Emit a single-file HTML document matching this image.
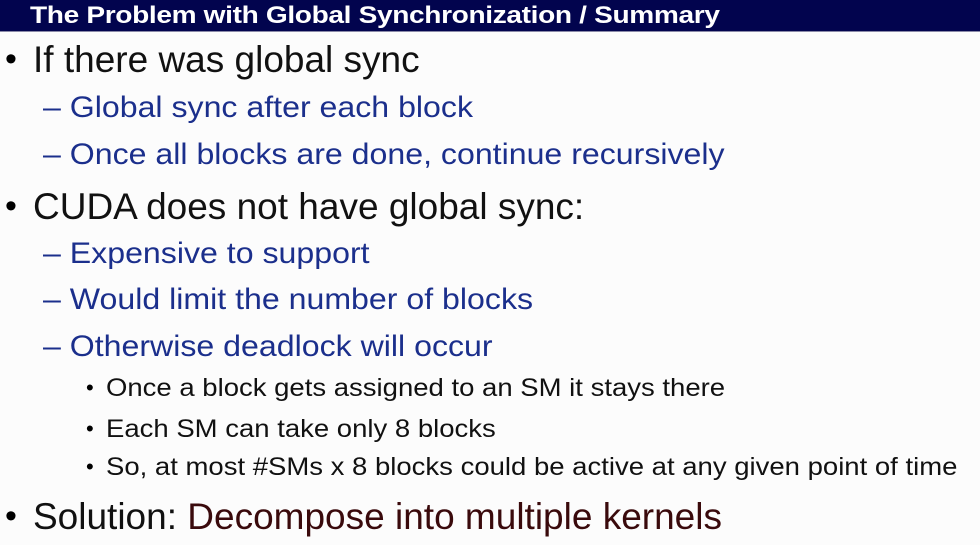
<!DOCTYPE html>
<html><head><style>
body{margin:0;width:980px;height:545px;background:#fcfcfc;position:relative;overflow:hidden;font-family:"Liberation Sans",Arial,sans-serif}
.hd{position:absolute;left:0;top:0;width:980px;height:31px;background:#02044e;border-bottom:1px solid #8a8aa8}
.hd span{position:absolute;left:30px;top:1px;color:#fff;font-weight:bold;font-size:24px;line-height:29px;letter-spacing:-0.3px;white-space:nowrap;transform:scaleX(1.17);transform-origin:left center}
.l{position:absolute;white-space:nowrap;line-height:1}
.a{font-size:37px;color:#111;left:33px}
.b{font-size:30px;color:#1b2f8c;left:43px;transform:scaleX(1.07);transform-origin:left center}
.c{font-size:25px;color:#111;left:106px;transform:scaleX(1.1);transform-origin:left center}
.bu{position:absolute;white-space:nowrap;line-height:1}
</style></head><body>
<div class="hd"><span>The Problem with Global Synchronization / Summary</span></div>
<div class="bu" style="left:5px;top:42px;font-size:34px">•</div>
<div class="l a" style="top:41px">If there was global sync</div>
<div class="l b" style="top:93px">– Global sync after each block</div>
<div class="l b" style="top:140px">– Once all blocks are done, continue recursively</div>
<div class="bu" style="left:5px;top:189px;font-size:34px">•</div>
<div class="l a" style="top:188px">CUDA does not have global sync:</div>
<div class="l b" style="top:239px">– Expensive to support</div>
<div class="l b" style="top:285px">– Would limit the number of blocks</div>
<div class="l b" style="top:332px">– Otherwise deadlock will occur</div>
<div class="bu" style="left:86px;top:377px;font-size:22px">•</div>
<div class="l c" style="top:376px">Once a block gets assigned to an SM it stays there</div>
<div class="bu" style="left:86px;top:418px;font-size:22px">•</div>
<div class="l c" style="top:417px">Each SM can take only 8 blocks</div>
<div class="bu" style="left:86px;top:456px;font-size:22px">•</div>
<div class="l c" style="top:455px">So, at most #SMs x 8 blocks could be active at any given point of time</div>
<div class="bu" style="left:5px;top:499px;font-size:34px">•</div>
<div class="l a" style="top:498px">Solution: <span style="color:#3a0a0c">Decompose into multiple kernels</span></div>
</body></html>
